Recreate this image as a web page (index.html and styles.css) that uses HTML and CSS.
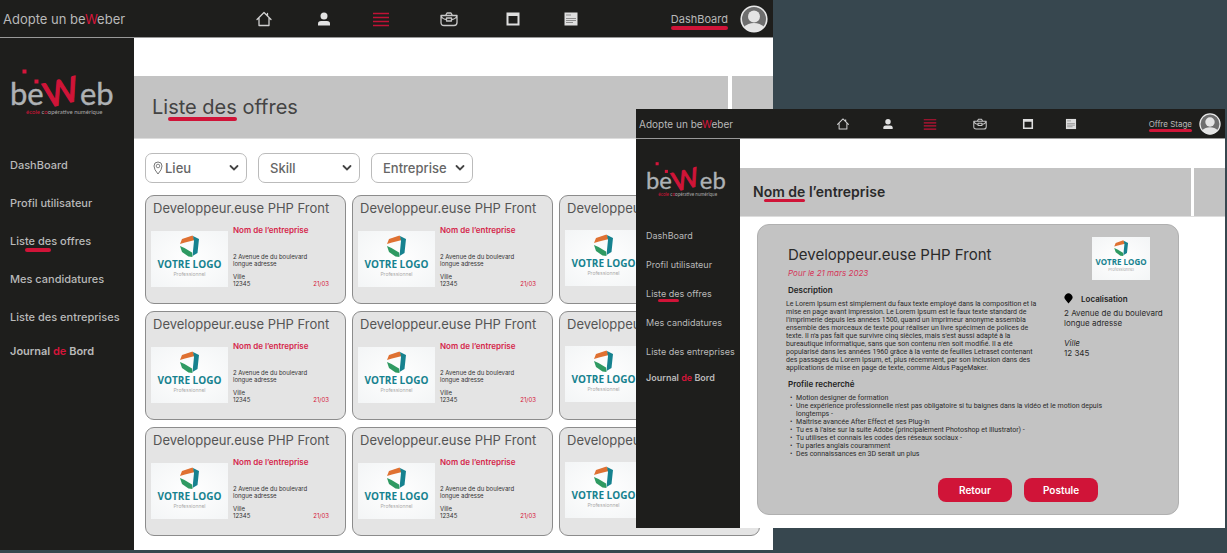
FILE: index.html
```html
<!DOCTYPE html>
<html lang="fr">
<head>
<meta charset="utf-8">
<title>Adopte un beWeber</title>
<link rel="stylesheet" href="styles.css">
</head>
<body>
<svg class="sprite" aria-hidden="true">
  <symbol id="i-home" viewBox="0 0 18 18"><path d="M2 9.500 9 2.500l7 7M4 8v7.500h10V8M12.500 5.500V3.500" fill="none" stroke="#d0d0d0" stroke-width="1.300" stroke-linejoin="round" stroke-linecap="round"/></symbol>
  <symbol id="i-user" viewBox="0 0 18 18"><circle cx="9" cy="6" r="3.500" fill="#e2e2e2"/><path d="M3 15.500v-2q0-2.500 3-2.500h6q3 0 3 2.500v2z" fill="#e2e2e2"/></symbol>
  <symbol id="i-list" viewBox="0 0 18 18"><path d="M1 3.500h16M1 7.500h16M1 11.500h16M1 15.500h16" stroke="#c01235" stroke-width="1.500"/></symbol>
  <symbol id="i-case" viewBox="0 0 18 18"><path d="M1 5.500h16v7q0 3-3 3H4q-3 0-3-3zM5.500 5.500 7 3h4l1.500 2.500M1 6q2 3.500 5.500 3.500M17 6q-2 3.500-5.500 3.500M6.500 8h5v3h-5z" fill="none" stroke="#c8c8c8" stroke-width="1.300" stroke-linejoin="round"/></symbol>
  <symbol id="i-window" viewBox="0 0 18 18"><path d="M2.500 2.500h13v13h-13zM4.500 6v7.500h9V6z" fill="#dedede" fill-rule="evenodd"/></symbol>
  <symbol id="i-note" viewBox="0 0 18 18"><path d="M2.500 2.500h13v13h-13z" fill="#dedede"/><path d="M4 5h5M4 8.500h10M4 10.500h10M4 12.500h7" stroke="#777" stroke-width=".8"/></symbol>
  <symbol id="i-avatar" viewBox="0 0 28 28"><circle cx="14" cy="14" r="13" fill="#6e6e6e"/><path d="M4 22q4-4 10-4t10 4q-4 5-10 5T4 22z" fill="#e4e4e4"/><circle cx="14" cy="11.500" r="6" fill="#e4e4e4"/><circle cx="14" cy="14" r="12.800" fill="none" stroke="#e8e8e8" stroke-width="1.600"/></symbol>
  <symbol id="i-chevron" viewBox="0 0 10 8"><path d="M1.500 2 5 5.500 8.500 2" fill="none" stroke="#444" stroke-width="1.800" stroke-linecap="round"/></symbol>
  <symbol id="i-place" viewBox="0 0 10 14"><path d="M5 13Q1 8.500 1 5a4 4 0 0 1 8 0q0 3.500-4 8z" fill="none" stroke="#777"/><circle cx="5" cy="5" r="1.800" fill="none" stroke="#888"/></symbol>
  <symbol id="i-pin" viewBox="0 0 10 12"><path d="M5 11.500 1.600 7.500a4.400 4.400 0 1 1 6.800 0z" fill="#000"/></symbol>
  <symbol id="i-mark" viewBox="0 0 20 22">
    <path d="M0 9 2 4 12.500.5 15 5 5 7.500z" fill="#df7132"/>
    <path d="m13 1 6 3-1.500 14-5 3 1.500-15z" fill="#16828f"/>
    <path d="m0 11 4.500 2 7.500 4.500.5 4.500-4-.5L2 17z" fill="#2f9a62"/>
  </symbol>
</svg>

<div class="stage">
<section class="screen screen-list" aria-label="Liste des offres">
  <header class="topbar">
    <span class="brand">Adopte un be<b>W</b>eber</span>
    <nav class="icons" aria-label="Raccourcis">
      <a href="#" aria-label="Accueil"><svg><use href="#i-home"/></svg></a>
      <a href="#" aria-label="Profil"><svg><use href="#i-user"/></svg></a>
      <a href="#" aria-label="Offres"><svg><use href="#i-list"/></svg></a>
      <a href="#" aria-label="Candidatures"><svg><use href="#i-case"/></svg></a>
      <a href="#" aria-label="Entreprises"><svg><use href="#i-window"/></svg></a>
      <a href="#" aria-label="Journal"><svg><use href="#i-note"/></svg></a>
    </nav>
    <div class="account"><span class="where">DashBoard</span><svg class="avatar"><use href="#i-avatar"/></svg></div>
  </header>
  <div class="body">
    <aside class="side">
      <svg class="logo" viewBox="0 0 104 48" role="img" aria-label="beWeb">
        <rect x="12.500" y="1.500" width="4" height="4" fill="#d5153a"/><rect x="24.500" y="11.500" width="4" height="4" fill="#d5153a"/>
        <text class="logo-word" x="0" y="37">be</text><text class="logo-w" x="37" y="40" transform="rotate(-14 37 40)">W</text><text class="logo-word" x="70" y="37">eb</text>
        <text class="logo-tag" x="16" y="46"><tspan class="red">école </tspan>c<tspan class="red">o</tspan>opérative numérique</text>
      </svg>
      <nav class="menu" aria-label="Menu">
        <a href="#">DashBoard</a>
        <a href="#">Profil utilisateur</a>
        <a href="#">Lis<span class="mark">te de</span>s offres</a>
        <a href="#">Mes candidatures</a>
        <a href="#">Liste des entreprises</a>
        <a class="journal" href="#">Journal <b>de</b> Bord</a>
      </nav>
    </aside>
    <main class="main">
      <div class="banner"><h1>Li<span class="mark">ste des</span> offres</h1></div>
      <form class="filters">
        <label class="filter with-icon"><svg class="place"><use href="#i-place"/></svg><select aria-label="Lieu"><option>Lieu</option></select><svg class="chevron"><use href="#i-chevron"/></svg></label>
        <label class="filter"><select aria-label="Skill"><option>Skill</option></select><svg class="chevron"><use href="#i-chevron"/></svg></label>
        <label class="filter"><select aria-label="Entreprise"><option>Entreprise</option></select><svg class="chevron"><use href="#i-chevron"/></svg></label>
      </form>
      <div class="offers">
        <article class="offer"><h2>Developpeur.euse PHP Front</h2><div class="company"><svg><use href="#i-mark"/></svg><strong>VOTRE LOGO</strong><small>Professionnel</small></div><div class="info"><h3>Nom de l’entreprise</h3><p>2 Avenue de du boulevard<br>longue adresse</p><div class="foot"><p>Ville<br>12345</p><time>21/03</time></div></div></article>
        <article class="offer"><h2>Developpeur.euse PHP Front</h2><div class="company"><svg><use href="#i-mark"/></svg><strong>VOTRE LOGO</strong><small>Professionnel</small></div><div class="info"><h3>Nom de l’entreprise</h3><p>2 Avenue de du boulevard<br>longue adresse</p><div class="foot"><p>Ville<br>12345</p><time>21/03</time></div></div></article>
        <article class="offer"><h2>Developpeur.euse PHP Front</h2><div class="company"><svg><use href="#i-mark"/></svg><strong>VOTRE LOGO</strong><small>Professionnel</small></div></article>
        <article class="offer"><h2>Developpeur.euse PHP Front</h2><div class="company"><svg><use href="#i-mark"/></svg><strong>VOTRE LOGO</strong><small>Professionnel</small></div><div class="info"><h3>Nom de l’entreprise</h3><p>2 Avenue de du boulevard<br>longue adresse</p><div class="foot"><p>Ville<br>12345</p><time>21/03</time></div></div></article>
        <article class="offer"><h2>Developpeur.euse PHP Front</h2><div class="company"><svg><use href="#i-mark"/></svg><strong>VOTRE LOGO</strong><small>Professionnel</small></div><div class="info"><h3>Nom de l’entreprise</h3><p>2 Avenue de du boulevard<br>longue adresse</p><div class="foot"><p>Ville<br>12345</p><time>21/03</time></div></div></article>
        <article class="offer"><h2>Developpeur.euse PHP Front</h2><div class="company"><svg><use href="#i-mark"/></svg><strong>VOTRE LOGO</strong><small>Professionnel</small></div></article>
        <article class="offer"><h2>Developpeur.euse PHP Front</h2><div class="company"><svg><use href="#i-mark"/></svg><strong>VOTRE LOGO</strong><small>Professionnel</small></div><div class="info"><h3>Nom de l’entreprise</h3><p>2 Avenue de du boulevard<br>longue adresse</p><div class="foot"><p>Ville<br>12345</p><time>21/03</time></div></div></article>
        <article class="offer"><h2>Developpeur.euse PHP Front</h2><div class="company"><svg><use href="#i-mark"/></svg><strong>VOTRE LOGO</strong><small>Professionnel</small></div><div class="info"><h3>Nom de l’entreprise</h3><p>2 Avenue de du boulevard<br>longue adresse</p><div class="foot"><p>Ville<br>12345</p><time>21/03</time></div></div></article>
        <article class="offer"><h2>Developpeur.euse PHP Front</h2><div class="company"><svg><use href="#i-mark"/></svg><strong>VOTRE LOGO</strong><small>Professionnel</small></div></article>
      </div>
    </main>
  </div>
</section>

<section class="screen screen-detail" aria-label="Offre Stage">
  <header class="topbar">
    <span class="brand">Adopte un be<b>W</b>eber</span>
    <nav class="icons" aria-label="Raccourcis">
      <a href="#" aria-label="Accueil"><svg><use href="#i-home"/></svg></a>
      <a href="#" aria-label="Profil"><svg><use href="#i-user"/></svg></a>
      <a href="#" aria-label="Offres"><svg><use href="#i-list"/></svg></a>
      <a href="#" aria-label="Candidatures"><svg><use href="#i-case"/></svg></a>
      <a href="#" aria-label="Entreprises"><svg><use href="#i-window"/></svg></a>
      <a href="#" aria-label="Journal"><svg><use href="#i-note"/></svg></a>
    </nav>
    <div class="account"><span class="where">Offre Stage</span><svg class="avatar"><use href="#i-avatar"/></svg></div>
  </header>
  <div class="body">
    <aside class="side">
      <svg class="logo" viewBox="0 0 104 48" role="img" aria-label="beWeb">
        <rect x="12.500" y="1.500" width="4" height="4" fill="#d5153a"/><rect x="24.500" y="11.500" width="4" height="4" fill="#d5153a"/>
        <text class="logo-word" x="0" y="37">be</text><text class="logo-w" x="37" y="40" transform="rotate(-14 37 40)">W</text><text class="logo-word" x="70" y="37">eb</text>
        <text class="logo-tag" x="16" y="46"><tspan class="red">école </tspan>c<tspan class="red">o</tspan>opérative numérique</text>
      </svg>
      <nav class="menu" aria-label="Menu">
        <a href="#">DashBoard</a>
        <a href="#">Profil utilisateur</a>
        <a href="#">Lis<span class="mark">te de</span>s offres</a>
        <a href="#">Mes candidatures</a>
        <a href="#">Liste des entreprises</a>
        <a class="journal" href="#">Journal <b>de</b> Bord</a>
      </nav>
    </aside>
    <main class="main">
      <div class="banner"><h1>N<span class="mark">om de</span> l’entreprise</h1></div>
      <article class="detail">
        <div class="text">
          <h2>Developpeur.euse PHP Front</h2>
          <p class="date">Pour le 21 mars 2023</p>
          <h3>Description</h3>
          <p class="copy">Le Lorem Ipsum est simplement du faux texte employé dans la composition et la<br>mise en page avant impression. Le Lorem Ipsum est le faux texte standard de<br>l'imprimerie depuis les années 1500, quand un imprimeur anonyme assembla<br>ensemble des morceaux de texte pour réaliser un livre spécimen de polices de<br>texte. Il n'a pas fait que survivre cinq siècles, mais s'est aussi adapté à la<br>bureautique informatique, sans que son contenu n'en soit modifié. Il a été<br>popularisé dans les années 1960 grâce à la vente de feuilles Letraset contenant<br>des passages du Lorem Ipsum, et, plus récemment, par son inclusion dans des<br>applications de mise en page de texte, comme Aldus PageMaker.</p>
        </div>
        <div class="place-info">
          <div class="company"><svg><use href="#i-mark"/></svg><strong>VOTRE LOGO</strong><small>Professionnel</small></div>
          <h3><svg><use href="#i-pin"/></svg>Localisation</h3>
          <p>2 Avenue de du boulevard<br>longue adresse</p>
          <p><em>Ville</em><br>12 345</p>
        </div>
        <div class="profile">
          <h3>Profile recherché</h3>
          <ul>
            <li>Motion designer de formation</li>
            <li>Une expérience professionnelle n'est pas obligatoire si tu baignes dans la vidéo et le motion depuis<br>longtemps -</li>
            <li>Maitrise avancée After Effect et ses Plug-in</li>
            <li>Tu es à l'aise sur la suite Adobe (principalement Photoshop et Illustrator) -</li>
            <li>Tu utilises et connais les codes des réseaux sociaux -</li>
            <li>Tu parles anglais couramment</li>
            <li>Des connaissances en 3D serait un plus</li>
          </ul>
        </div>
        <div class="actions"><button type="button">Retour</button><button type="button">Postule</button></div>
      </article>
    </main>
  </div>
</section>
</div>
</body>
</html>
```
FILE: styles.css
```css
* { box-sizing: border-box; }
body {
  margin: 0;
  min-height: 100vh;
  background: #37474f;
  font-family: Inter, "Liberation Sans", sans-serif;
  color: #444;
}
h1, h2, h3, p, ul { margin: 0; padding: 0; font-weight: 400; }
a { color: inherit; text-decoration: none; }
svg { display: block; }
.sprite { position: absolute; width: 0; height: 0; }

.stage { position: relative; overflow: hidden; min-height: 100vh; }
.screen { background: #fff; }
.screen-list {
  --bar: 38px; --side: 134px; --icon: 18px; --avatar: 28px;
  --brand: 13px; --menu: 11px; --small: 11px; --title: 20px;
  --line: 4px;
  width: 63%;
}
.screen-detail {
  --bar: 30px; --side: 104px; --icon: 14px; --avatar: 22px;
  --brand: 10px; --menu: 9px; --small: 8px; --title: 14px;
  --line: 3px;
  position: absolute;
  top: 109px;
  right: 2px;
  width: 48%;
}

/* Top bar */
.topbar {
  display: grid;
  grid-template-columns: 33% 42% 1fr;
  align-items: center;
  height: var(--bar);
  background: #1e1e1c;
  border-bottom: 1px solid #999;
  color: #b9b9b9;
}
.screen-detail .topbar { grid-template-columns: 34% 41% 1fr; }
.brand { padding-left: 3px; font-size: var(--brand); white-space: nowrap; }
.brand b, .journal b { color: #d5153a; font-weight: inherit; }
.icons {
  display: grid;
  grid-template-columns: 60fr 57fr 68fr 64fr 58fr auto;
}
.icons svg { width: var(--icon); height: var(--icon); }
.account { display: flex; justify-content: flex-end; align-items: center; gap: 12px; padding-right: 5px; }
.screen-detail .account { gap: 7px; padding-right: 4px; }
.where { position: relative; font-size: var(--small); white-space: nowrap; }
.avatar { width: var(--avatar); height: var(--avatar); }
.where::after, .mark::after {
  content: "";
  position: absolute;
  left: 0;
  right: 0;
  bottom: calc(-1 * var(--line));
  height: var(--line);
  border-radius: 2px;
  background: #d01438;
}
.mark { position: relative; }
.banner .mark::after { bottom: -2px; }

/* Side bar */
.body { display: grid; grid-template-columns: var(--side) 1fr; }
.side { background: #1e1e1c; color: #b9b9b9; padding: 30px 0 0 10px; }
.logo { width: 104px; height: 48px; overflow: visible; }
.logo-word { font: 31px Lato, sans-serif; fill: #aeb2b5; stroke: #aeb2b5; stroke-width: 0.4; }
.logo-w { font: 400 34px Lato, sans-serif; fill: #d01438; stroke: #d01438; stroke-width: 1.2; }
.logo-tag { font: 6px Lato, sans-serif; fill: #aaa; }
.red { fill: #d01438; }
.menu { display: grid; gap: 22px; margin-top: 41px; font-size: var(--menu); font-weight: 500; line-height: 16px; white-space: nowrap; }
.menu a { width: max-content; }
.journal { font-weight: 600; margin-top: -4px; }
.screen-detail .side { padding-top: 22px; }
.screen-detail .logo { width: 80px; height: 37px; }
.screen-detail .menu { gap: 17px; line-height: 12px; margin-top: 32px; font-weight: 400; }
.screen-detail .journal { margin-top: -3px; }

/* Page title */
.main { min-width: 0; padding-top: 38px; }
.banner {
  display: flex;
  align-items: center;
  height: 63px;
  padding-left: 18px;
  border-bottom: 1px solid #ddd;
  background: linear-gradient(#fff, #fff) right 41px top 0 / 4px 100% no-repeat #c3c3c3;
}
.banner h1 { font-size: var(--title); line-height: 24px; white-space: nowrap; }
.screen-detail .main { padding: 29px 0 13px; }
.screen-detail .banner {
  height: 49px;
  padding-left: 13px;
  background-position: right 31px top 0;
  background-size: 3px 100%;
}
.screen-detail .banner h1 { font-weight: 600; line-height: 18px; color: #2a2a2a; }

/* Filters */
.filters { display: flex; gap: 11px; padding: 14px 11px 12px; }
.filter {
  display: flex;
  align-items: center;
  width: 102px;
  height: 30px;
  padding: 0 7px 0 11px;
  border: 1px solid #bbb;
  border-radius: 7px;
}
.with-icon { padding-left: 7px; }
.filter select {
  flex: 1;
  min-width: 0;
  padding: 0;
  border: 0;
  background: none;
  appearance: none;
  font: 500 13px Inter, sans-serif;
  color: #666;
}
.place { width: 10px; height: 14px; margin-right: 2px; }
.chevron { width: 10px; height: 8px; }

/* Offers */
.offers { display: grid; grid-template-columns: repeat(3, 1fr); gap: 7px 6px; padding: 0 13px 14px 11px; }
.offer {
  display: grid;
  grid-template-columns: 77px 1fr;
  grid-template-rows: 24px 1fr;
  column-gap: 5px;
  align-content: start;
  min-width: 0;
  height: 109px;
  padding: 0 16px 17px 5px;
  border: 1px solid #8c8c8c;
  border-radius: 9px;
  background: #e4e4e4;
}
.offer h2 { grid-column: 1 / -1; padding-left: 2px; font-size: 13px; line-height: 24px; color: #555; white-space: nowrap; }
.company {
  display: flex;
  flex-direction: column;
  align-items: center;
  align-self: end;
  height: 56px;
  padding-top: 4px;
  background: radial-gradient(#fff, #f3f5f6);
  white-space: nowrap;
}
.company svg { width: 20px; height: 22px; }
.company strong { font: 700 10px/14px "Open Sans", sans-serif; color: #16828f; }
.company small { font-size: 5px; line-height: 6px; color: #aaa; }
.info { display: flex; flex-direction: column; font-size: 6px; line-height: 7px; color: #333; white-space: nowrap; }
.info h3 { margin: 4px 0 17px; font-size: 8px; line-height: 12px; font-weight: 600; color: #d5254a; }
.foot { display: flex; justify-content: space-between; align-items: flex-end; margin-top: 6px; }
.foot time { color: #d5153a; }

/* Offer detail */
.detail {
  display: grid;
  grid-template-columns: 1fr 114px;
  margin: 7px 46px 0 17px;
  padding: 12px 0 12px 30px;
  border: 1px solid #b0b0b0;
  border-radius: 12px;
  background: #c3c3c3;
  color: #2a2a2a;
  white-space: nowrap;
}
.text { padding-top: 8px; }
.detail h2 { font-size: 15px; line-height: 20px; }
.date { margin-top: 2px; font-size: 8px; line-height: 12px; font-style: italic; color: #d5365a; }
.detail h3 { font-size: 8px; line-height: 10px; font-weight: 600; color: #222; }
.text h3 { margin: 6px 0 5px; }
.copy, .detail ul { font: 7px/8px Roboto, sans-serif; }
.copy { margin-left: -2px; }
.place-info { font-size: 8px; line-height: 10px; }
.place-info .company { width: 58px; height: 43px; margin-left: 28px; padding-top: 3px; }
.place-info .company svg { width: 15px; height: 16px; }
.place-info .company strong { font-size: 8px; line-height: 11px; }
.place-info .company small { font-size: 4px; line-height: 5px; }
.place-info h3 { display: flex; align-items: center; gap: 8px; margin-top: 13px; }
.place-info h3 svg { width: 9px; height: 11px; }
.place-info p { margin: 4px 0 10px; }
.profile { grid-column: 1 / -1; margin-top: 7px; }
.detail ul { margin-top: 5px; padding-left: 8px; list-style: none; }
.detail li { text-indent: -6px; }
.detail li::before { content: "•"; display: inline-block; width: 6px; text-indent: 0; }
.actions { grid-column: 1 / -1; display: flex; justify-content: flex-end; gap: 12px; padding: 20px 80px 0 0; }
.actions button {
  width: 74px;
  height: 24px;
  padding: 0;
  border: 0;
  border-radius: 8px;
  background: #d01438;
  color: #fff;
  font: 600 10px Inter, sans-serif;
}
```
